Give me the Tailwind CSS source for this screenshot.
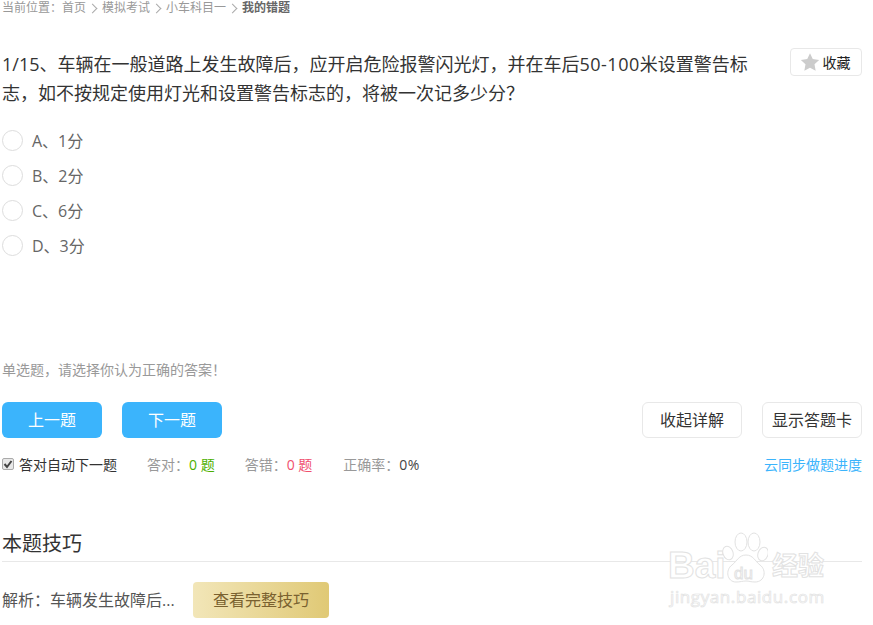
<!DOCTYPE html>
<html lang="zh-CN">
<head>
    <meta charset="UTF-8">
    <title>我的错题</title>
    <script src="https://cdn.jsdelivr.net/npm/@tailwindcss/browser@4"></script>
</head>
<body class="bg-white font-['Open_Sans','Noto_Sans_CJK_SC',sans-serif] overflow-hidden">
<div class="relative w-[873px] h-[625px] overflow-hidden">
    <div class="ml-[2px] w-[860px]">
        <!-- breadcrumb -->
        <div class="flex items-center h-[16px] text-[12px] leading-[16px] text-[#999]">
            <span>当前位置：首页</span>
            <span class="ml-[3px] mr-[6px] w-[7px] h-[7px] border-t border-r border-[#aaa] rotate-45"></span>
            <span>模拟考试</span>
            <span class="ml-[3px] mr-[6px] w-[7px] h-[7px] border-t border-r border-[#aaa] rotate-45"></span>
            <span>小车科目一</span>
            <span class="ml-[3px] mr-[6px] w-[7px] h-[7px] border-t border-r border-[#aaa] rotate-45"></span>
            <span class="font-bold text-[#666]">我的错题</span>
        </div>

        <!-- question -->
        <div class="flex justify-between items-start mt-[34px]">
            <p class="w-[752px] text-[18px] leading-[29px] text-[#333]">1/15、车辆在一般道路上发生故障后，应开启危险报警闪光灯，并在车后<span class="tracking-[0.5px]">50-100</span>米设置警告标志，如不按规定使用灯光和设置警告标志的，将被一次记多少分？</p>
            <button class="flex items-center justify-center w-[72px] h-[28px] -mt-[2px] border border-[#e8e8e8] rounded-[4px] text-[14px] text-[#222]">
                <svg class="w-[20px] h-[20px] mr-[3px] -ml-[2px]" viewBox="0 0 24 24"><path fill="#ccc" d="M12 1.5l3.3 7 7.700 1-5.600 5.300 1.400 7.700-6.800-3.700-6.800 3.700 1.400-7.700L1 9.500l7.700-1z"/></svg>
                收藏
            </button>
        </div>

        <!-- options -->
        <div class="mt-[15px] flex flex-col text-[16px] text-[#666]">
            <label class="flex items-center h-[35px] gap-[9px]"><span class="w-[21px] h-[21px] rounded-full border border-[#ddd]"></span>A、1分</label>
            <label class="flex items-center h-[35px] gap-[9px]"><span class="w-[21px] h-[21px] rounded-full border border-[#ddd]"></span>B、2分</label>
            <label class="flex items-center h-[35px] gap-[9px]"><span class="w-[21px] h-[21px] rounded-full border border-[#ddd]"></span>C、6分</label>
            <label class="flex items-center h-[35px] gap-[9px]"><span class="w-[21px] h-[21px] rounded-full border border-[#ddd]"></span>D、3分</label>
        </div>

        <p class="mt-[97px] text-[14px] leading-[20px] text-[#999]">单选题，请选择你认为正确的答案！</p>

        <!-- buttons -->
        <div class="flex justify-between mt-[22px]">
            <div class="flex gap-[20px]">
                <button class="w-[100px] h-[36px] rounded-[6px] bg-[#3bb4fc] text-white text-[16px]">上一题</button>
                <button class="w-[100px] h-[36px] rounded-[6px] bg-[#3bb4fc] text-white text-[16px]">下一题</button>
            </div>
            <div class="flex gap-[20px]">
                <button class="w-[100px] h-[36px] rounded-[6px] border border-[#e8e8e8] text-[#333] text-[16px]">收起详解</button>
                <button class="w-[100px] h-[36px] rounded-[6px] border border-[#e8e8e8] text-[#333] text-[16px]">显示答题卡</button>
            </div>
        </div>

        <!-- stats -->
        <div class="flex justify-between items-center mt-[16px] h-[20px] text-[14px]">
            <div class="flex items-center">
                <span class="flex items-center justify-center w-[12px] h-[12px] mr-[5px] rounded-[2px] border border-[#aaa] bg-[#e8e8e8]">
                    <svg class="w-[10px] h-[10px]" viewBox="0 0 10 10"><path fill="none" stroke="#444" stroke-width="2" d="M1.500 5l2.500 3 4.500-6"/></svg>
                </span>
                <span class="text-[#333] w-[128px]">答对自动下一题</span>
                <span class="text-[#999] mr-[30px]">答对：<span class="text-[#4caf00]">0 题</span></span>
                <span class="text-[#999] mr-[31px]">答错：<span class="text-[#f0506e]">0 题</span></span>
                <span class="text-[#999]">正确率：<span class="text-[#444] tracking-[0.5px]">0%</span></span>
            </div>
            <a href="#" class="text-[#3bb4fc]">云同步做题进度</a>
        </div>

        <!-- tips -->
        <h2 class="mt-[49px] h-[39px] text-[20px] leading-[41px] text-[#333] border-b border-[#e8e8e8]">本题技巧</h2>
        <div class="flex items-center mt-[20px]">
            <span class="w-[191px] text-[16px] text-[#555]">解析：车辆发生故障后...</span>
            <button class="w-[136px] h-[36px] rounded-[4px] bg-linear-to-r from-[#f2e6b8] to-[#e0c975] text-[#7a6230] text-[16px]">查看完整技巧</button>
        </div>
    </div>

    <!-- watermark -->
    <div class="absolute left-[668px] top-[530px] w-[158px] h-[78px] pointer-events-none">
        <span class="absolute left-0 top-[16px] text-[37px] leading-[40px] font-bold font-['Liberation_Sans',sans-serif] text-white [-webkit-text-stroke:1px_#e2e2e2]">Bai</span>
        <svg class="absolute left-[54px] top-[2px] w-[46px] h-[52px]" viewBox="0 0 46 52" fill="#fff" stroke="#e2e2e2">
            <ellipse cx="6" cy="21" rx="5" ry="7" transform="rotate(-20 6 21)"/>
            <ellipse cx="19" cy="10" rx="6" ry="9"/>
            <ellipse cx="32" cy="10" rx="6" ry="9"/>
            <ellipse cx="41" cy="22" rx="5" ry="7" transform="rotate(20 41 22)"/>
            <path d="M24 23c7 0 9 6 14 10 7 5 5 17-5 17-4 0-6-1-9-1s-6 1-10 1c-9 0-11-12-4-17 5-4 7-10 14-10z"/>
        </svg>
        <span class="absolute left-[66px] top-[34px] text-[17px] leading-[20px] font-['Liberation_Sans',sans-serif] text-white [-webkit-text-stroke:1px_#e2e2e2]">du</span>
        <span class="absolute left-[104px] top-[18px] text-[26px] leading-[34px] font-bold text-white [-webkit-text-stroke:1px_#e2e2e2]">经验</span>
        <span class="absolute left-[2px] top-[57px] text-[17px] leading-[20px] tracking-[0.6px] text-white [-webkit-text-stroke:0.7px_#e2e2e2]">jingyan.baidu.com</span>
    </div>
</div>
</body>
</html>
